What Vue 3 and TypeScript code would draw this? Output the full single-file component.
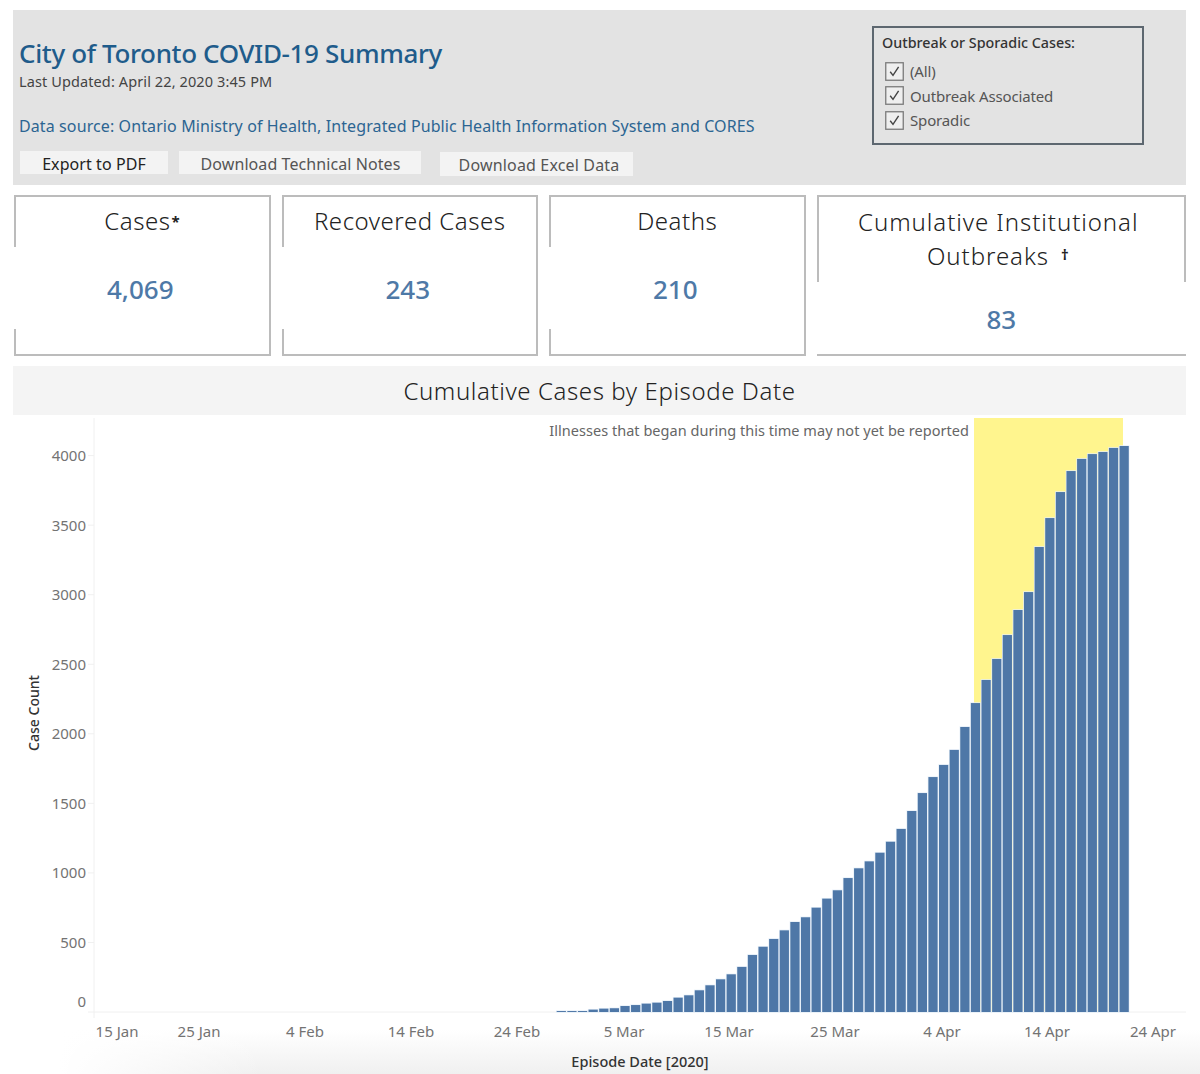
<script setup lang="ts">
// Toronto COVID-19 dashboard: header band, four KPI cards, cumulative bar chart.
// Chart scale is in page px so the svg overlays the same coords as the layout.
interface Kpi { lines: string[]; mark?: string; value: string; wide?: boolean }

const kpis: Kpi[] = [
  { lines: ['Cases'], mark: '*', value: '4,069' },
  { lines: ['Recovered Cases'], value: '243' },
  { lines: ['Deaths'], value: '210' },
  { lines: ['Cumulative Institutional', 'Outbreaks'], mark: '†', value: '83', wide: true },
]
const filters = ['(All)', 'Outbreak Associated', 'Sporadic']
const buttons = [
  { label: 'Export to PDF', cls: 'pdf' },
  { label: 'Download Technical Notes', cls: 'notes' },
  { label: 'Download Excel Data', cls: 'excel' },
]

const counts = [
  7, 7, 7, 17, 24, 27, 43, 50, 60, 67, 79, 103, 120, 156, 192, 235, 271, 324, 410, 469,
  525, 587, 647, 681, 750, 815, 875, 963, 1033, 1083, 1145, 1224, 1316, 1445, 1574, 1689, 1776, 1884, 2049, 2221,
  2387, 2538, 2710, 2890, 3019, 3343, 3551, 3738, 3889, 3976, 4011, 4026, 4055, 4069,
]
const BASE = 1012, PX = 0.1391, X0 = 556, STEP = 10.62, GAP = 1.4
const bars = counts.map((c, i) => ({
  x: X0 + i * STEP + GAP / 2,
  y: BASE - c * PX,
  h: c * PX,
}))
const yTicks = [500, 1000, 1500, 2000, 2500, 3000, 3500, 4000].map(v => ({ v, y: BASE - v * PX }))
const xTicks = [
  { t: '15 Jan', x: 117 }, { t: '25 Jan', x: 199 }, { t: '4 Feb', x: 305 }, { t: '14 Feb', x: 411 },
  { t: '24 Feb', x: 517 }, { t: '5 Mar', x: 624 }, { t: '15 Mar', x: 729 }, { t: '25 Mar', x: 835 },
  { t: '4 Apr', x: 942 }, { t: '14 Apr', x: 1047 }, { t: '24 Apr', x: 1153 },
]
</script>

<template>
  <div class="page">
    <header class="top">
      <div class="intro">
        <h1>City of Toronto COVID-19 Summary</h1>
        <p class="updated">Last Updated: April 22, 2020 3:45 PM</p>
        <p class="source">Data source: Ontario Ministry of Health, Integrated Public Health Information System and CORES</p>
        <div class="btns">
          <button v-for="b in buttons" :key="b.cls" :class="['btn', b.cls]">{{ b.label }}</button>
        </div>
      </div>
      <div class="filter">
        <div class="filter-title">Outbreak or Sporadic Cases:</div>
        <label v-for="f in filters" :key="f" class="check">
          <svg width="19" height="19" viewBox="0 0 19 19">
            <rect x="0.75" y="0.75" width="17.5" height="17.5" fill="#efefef" stroke="#7b7b7b" stroke-width="1.3" />
            <path d="M5.2 9.8 L8 13.4 L13.6 4.9" fill="none" stroke="#444" stroke-width="1.4" />
          </svg>
          <span>{{ f }}</span>
        </label>
      </div>
    </header>

    <section class="kpis">
      <div v-for="k in kpis" :key="k.value" :class="['kpi', { wide: k.wide }]">
        <div class="kpi-head">
          <template v-for="(line, i) in k.lines" :key="line">
            <div class="line">
              <span>{{ line }}</span>
              <span v-if="k.mark && i === k.lines.length - 1" class="mark">{{ k.mark }}</span>
            </div>
          </template>
        </div>
        <div class="kpi-val">{{ k.value }}</div>
        <div class="kpi-foot"></div>
      </div>
    </section>

    <h2 class="chart-title">Cumulative Cases by Episode Date</h2>

    <svg class="chart" viewBox="0 415 1200 659" width="1200" height="659">
      <rect x="974" y="418" width="149" height="594" fill="#fff58e" />
      <line x1="94" y1="418" x2="94" y2="1018" stroke="#f0f0f0" />
      <line x1="88" y1="1012" x2="1186" y2="1012" stroke="#f0f0f0" />
      <line v-for="t in yTicks" :key="t.v" x1="88" :y1="t.y" x2="94" :y2="t.y" stroke="#f0f0f0" />
      <rect v-for="(b, i) in bars" :key="i" class="bar" :x="b.x" :y="b.y" :width="STEP - GAP" :height="b.h" />

      <text class="note" x="969" y="436" text-anchor="end">Illnesses that began during this time may not yet be reported</text>
      <text v-for="t in yTicks" :key="t.v" class="tick" x="86" :y="t.y + 5.5" text-anchor="end">{{ t.v }}</text>
      <text class="tick" x="86" y="1007" text-anchor="end">0</text>
      <text v-for="t in xTicks" :key="t.t" class="tick" :x="t.x" y="1037" text-anchor="middle">{{ t.t }}</text>
      <text class="axis" x="640" y="1067" text-anchor="middle">Episode Date [2020]</text>
      <text class="axis side" transform="translate(39 713) rotate(-90)" text-anchor="middle">Case Count</text>
    </svg>
  </div>
</template>

<style scoped>
.page {
  position: relative; width: 1200px; height: 1074px; overflow: hidden; padding-top: 10px; box-sizing: border-box;
  font-family: "Noto Sans", "Open Sans", sans-serif; color: #333;
  background:
    linear-gradient(to right, #fff 5%, rgba(255, 255, 255, 0) 22%),
    linear-gradient(to bottom, #fff 1030px, #f0f0f0 1074px);
}
.top {
  display: flex; justify-content: space-between; box-sizing: border-box;
  height: 175px; margin: 0 14px 0 13px; background: #e3e3e3;
}
.intro { padding: 26px 0 0 6px; }
h1 { margin: 0; font-size: 26px; line-height: 34px; font-weight: 500; color: #1f5c8b; letter-spacing: -0.36px; }
.updated { margin: 1px 0 0; font-size: 14.5px; line-height: 20px; color: #444; letter-spacing: 0.11px; }
.source { margin: 24px 0 0; font-size: 16px; line-height: 22px; color: #2c6592; letter-spacing: 0.105px; }
.btns { display: flex; align-items: flex-start; margin-top: 14px; margin-left: 1px; }
.btn {
  height: 23px; padding: 2px 0 0; border: 0; background: #f3f3f3; font: inherit; font-size: 16px; line-height: 22px; color: #555;
  letter-spacing: 0.08px;
}
.btn.pdf { width: 148px; margin-right: 11px; color: #222; }
.btn.notes { width: 242px; margin-right: 19px; padding-left: 1px; }
.btn.excel { width: 193px; height: 24px; margin-top: 1px; padding-left: 5px; letter-spacing: 0.16px; }
.filter {
  box-sizing: border-box; width: 272px; height: 119px; margin: 16px 42px 0 0; padding: 5px 8px;
  border: 2px solid #5d6770; background: #e3e3e3;
}
.filter-title { font-size: 14.3px; line-height: 20px; font-weight: 500; color: #333; margin-bottom: 6px; }
.check { display: flex; align-items: center; gap: 6px; height: 24.5px; margin-left: 3px; font-size: 15px; color: #555; letter-spacing: -0.15px; }
.kpis { display: grid; grid-template-columns: 256.5px 256.5px 256.5px 1fr; gap: 11px; margin: 10px 14px 0; height: 161px; }
.kpi {
  display: flex; flex-direction: column; box-sizing: border-box;
  border-top: 2px solid #bcbcbc; border-right: 2px solid #bcbcbc; border-bottom: 2px solid #bcbcbc;
}
.kpi-head {
  height: 50px; display: flex; flex-direction: column; justify-content: center; padding-bottom: 3px; box-sizing: border-box;
  border-left: 2px solid #bcbcbc; font-size: 24px; font-weight: 300; line-height: 33px; color: #222; text-align: center;
  letter-spacing: 0.53px;
}
.kpi-val {
  flex: 1; display: flex; align-items: center; justify-content: center; padding: 2px 2px 0 0;
  font-size: 26px; font-weight: 500; color: #4e79a7;
}
.kpi-foot { height: 25px; border-left: 2px solid #bcbcbc; }
.kpi.wide { border-right: 0; }
.kpi.wide .kpi-head {
  height: 85px; border-right: 2px solid #bcbcbc; padding: 0 6px 3px 0; letter-spacing: 0.94px;
}
.kpi.wide .kpi-val { padding: 9px 0 0 0; }
.kpi.wide .kpi-foot { height: 8px; border-left: 0; }
.mark { font-size: 15px; font-weight: 700; vertical-align: 3px; margin-left: 1px; }
.kpi.wide .mark { margin-left: 12px; vertical-align: 5px; }
.chart-title {
  margin: 10px 14px 0 13px; height: 49px; background: #f4f4f4; text-align: center;
  font-size: 24px; line-height: 50px; font-weight: 300; color: #222; letter-spacing: 0.6px;
}
.chart { display: block; }
.bar { fill: #4e77a7; stroke: #e6eff8; stroke-width: 1.4; paint-order: stroke; }
.note { font-size: 14.5px; fill: #666; letter-spacing: 0.03px; }
.tick { font-size: 15px; fill: #737373; }
.axis { font-size: 14.5px; font-weight: 500; fill: #333; }
.axis.side { font-size: 14px; }
</style>
